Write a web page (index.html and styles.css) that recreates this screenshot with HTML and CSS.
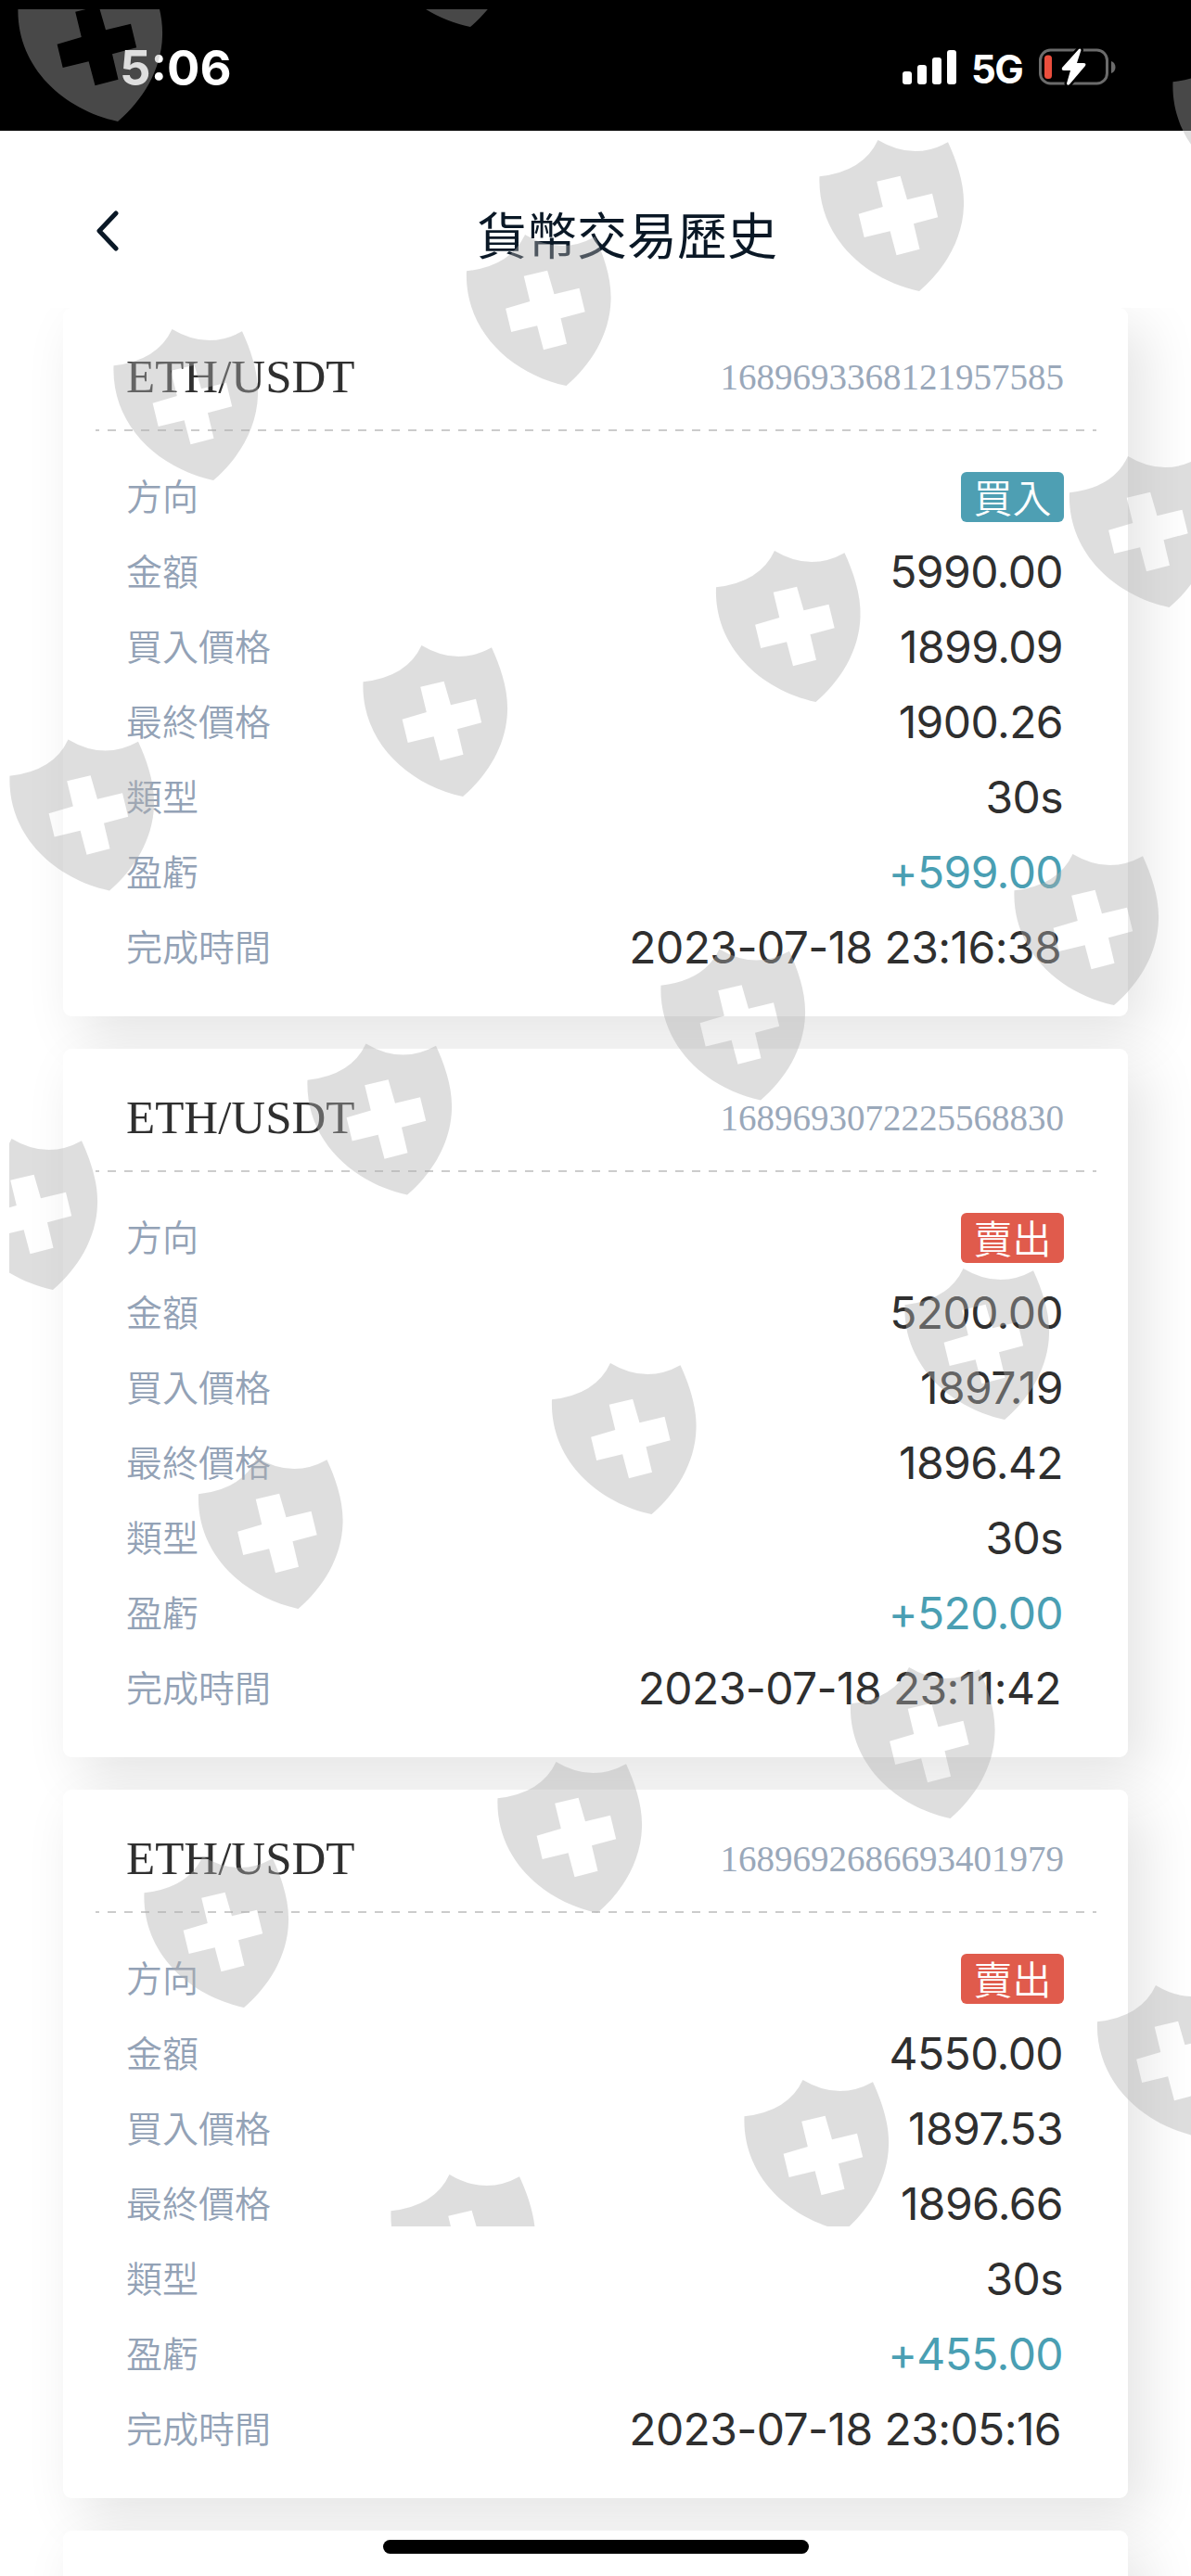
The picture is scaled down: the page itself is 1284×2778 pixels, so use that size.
FILE: index.html
```html
<!DOCTYPE html>
<html lang="zh-Hant">
  <head>
    <meta charset="UTF-8" />
    <meta name="viewport" content="width=device-width, initial-scale=1.0" />
    <title>貨幣交易歷史</title>
    <link rel="stylesheet" href="styles.css">
  </head>
  <body>
    <div class="status-bar">
      <span class="time">5:06</span>
      <div class="status-right">
        <svg class="signal" width="58" height="38" viewBox="0 0 58 38" fill="#fff">
          <rect x="0" y="23" width="10" height="14" rx="3" />
          <rect x="16" y="16" width="10" height="21" rx="3" />
          <rect x="32" y="8" width="10" height="29" rx="3" />
          <rect x="48" y="0" width="10" height="37" rx="3" />
        </svg>
        <span class="network">5G</span>
        <svg class="battery" width="84" height="44" viewBox="0 0 84 44">
          <rect x="1.5" y="4" width="72" height="36" rx="11" fill="none" stroke="#6b6b6b" stroke-width="3" />
          <path d="M78 16 C84 18 84 27 78 29 Z" fill="#6b6b6b" />
          <rect x="6" y="9.500" width="8" height="25.500" rx="3.500" fill="#eb4e3d" />
          <path d="M43 3 L25 23 Q24 26 27 26 H34 L30 40 Q30.500 43 33 41 L50 21 Q51.500 18 48 18 H41 L45.500 4 Q45 1.500 43 3 Z" fill="#fff" stroke="#000" stroke-width="5" paint-order="stroke" />
        </svg>
      </div>
    </div>

    <header class="nav">
      <svg class="back" width="26" height="46" viewBox="0 0 26 46">
        <path d="M22 4 L4 23 L22 42" fill="none" stroke="#0a1826" stroke-width="5" stroke-linecap="round" stroke-linejoin="round" />
      </svg>
      <h1>貨幣交易歷史</h1>
    </header>

    <main class="list">
      <section class="card">
        <div class="card-head">
          <span class="pair">ETH/USDT</span>
          <span class="order-no">1689693368121957585</span>
        </div>
        <ul class="card-body">
          <li><label>方向</label><span class="tag buy">買入</span></li>
          <li><label>金額</label><span class="value">5990.00</span></li>
          <li><label>買入價格</label><span class="value">1899.09</span></li>
          <li><label>最終價格</label><span class="value">1900.26</span></li>
          <li><label>類型</label><span class="value">30s</span></li>
          <li><label>盈虧</label><span class="value profit">+599.00</span></li>
          <li><label>完成時間</label><span class="value date">2023-07-18 23:16:38</span></li>
        </ul>
      </section>

      <section class="card">
        <div class="card-head">
          <span class="pair">ETH/USDT</span>
          <span class="order-no">1689693072225568830</span>
        </div>
        <ul class="card-body">
          <li><label>方向</label><span class="tag sell">賣出</span></li>
          <li><label>金額</label><span class="value">5200.00</span></li>
          <li><label>買入價格</label><span class="value">1897.19</span></li>
          <li><label>最終價格</label><span class="value">1896.42</span></li>
          <li><label>類型</label><span class="value">30s</span></li>
          <li><label>盈虧</label><span class="value profit">+520.00</span></li>
          <li><label>完成時間</label><span class="value date">2023-07-18 23:11:42</span></li>
        </ul>
      </section>

      <section class="card">
        <div class="card-head">
          <span class="pair">ETH/USDT</span>
          <span class="order-no">1689692686693401979</span>
        </div>
        <ul class="card-body">
          <li><label>方向</label><span class="tag sell">賣出</span></li>
          <li><label>金額</label><span class="value">4550.00</span></li>
          <li><label>買入價格</label><span class="value">1897.53</span></li>
          <li><label>最終價格</label><span class="value">1896.66</span></li>
          <li><label>類型</label><span class="value">30s</span></li>
          <li><label>盈虧</label><span class="value profit">+455.00</span></li>
          <li><label>完成時間</label><span class="value date">2023-07-18 23:05:16</span></li>
        </ul>
      </section>

      <section class="card"></section>
    </main>

    <div class="home-indicator"></div>

    <!-- 盾牌水印 -->
    <svg class="watermark" width="1274" height="2391" viewBox="10 10 1274 2391">
      <defs>
        <path id="shield" fill-rule="evenodd" d="M.5 39.300 Q48 34 63.500 0 Q102 23 139 2.300 C148 22 157 47 156 71 C155 108 134 141 108 163 C48 150 -2 103 .5 39.300 Z
          M62.200 44.700 L87.600 38.700 L95 64.300 L122 57.700 L128.200 83.300 L102 90.300 L108.500 117.700 L83.500 124.300 L76.600 98.300 L48.700 105 L42.600 79.700 L68.800 72 Z" />
      </defs>
      <use href="#shield" x="19" y="-32" />
      <use href="#shield" x="399" y="-134" />
      <use href="#shield" x="1264" y="49" />
      <use href="#shield" x="883" y="151" />
      <use href="#shield" x="502.500" y="253" />
      <use href="#shield" x="122" y="355" />
      <use href="#shield" x="1152.500" y="492" />
      <use href="#shield" x="771.500" y="594" />
      <use href="#shield" x="391" y="696" />
      <use href="#shield" x="10" y="797.500" />
      <use href="#shield" x="1093" y="921" />
      <use href="#shield" x="712" y="1023.500" />
      <use href="#shield" x="331" y="1125.500" />
      <use href="#shield" x="-51" y="1228" />
      <use href="#shield" x="975" y="1368" />
      <use href="#shield" x="594.500" y="1470" />
      <use href="#shield" x="213.500" y="1572" />
      <use href="#shield" x="916.500" y="1798" />
      <use href="#shield" x="536" y="1900" />
      <use href="#shield" x="155" y="2002" />
      <use href="#shield" x="1182.500" y="2141" />
      <use href="#shield" x="802" y="2243" />
      <use href="#shield" x="421" y="2345" />
    </svg>
  </body>
</html>
```
FILE: styles.css
```css
* {
  box-sizing: border-box;
}

body {
  position: relative;
  margin: 0;
  width: 1284px;
  height: 2778px;
  overflow: hidden;
  display: flex;
  flex-direction: column;
  background-color: #fff;
  font-family: Inter, 'Noto Sans CJK TC', sans-serif;
  color: #2f2f2f;
}

.status-bar {
  flex: none;
  height: 141px;
  padding: 0 80px 0 129px;
  display: flex;
  justify-content: space-between;
  background-color: #000;
  color: #fff;
}

.time {
  margin-top: 42px;
  font-size: 52.5px;
  line-height: 62px;
  font-weight: 700;
}

.status-right {
  display: flex;
  align-items: flex-start;
}

.signal {
  margin-top: 54px;
}

.network {
  width: 89px;
  padding-left: 16px;
  margin-top: 50px;
  font-size: 42px;
  line-height: 50px;
  font-weight: 700;
  letter-spacing: -1.5px;
}

.battery {
  margin-top: 50px;
}

.nav {
  flex: none;
  height: 191px;
  display: flex;
  align-items: flex-start;
}

.back {
  margin: 85px 0 0 103px;
}

h1 {
  margin: 75px 0 0 385px;
  font-size: 54px;
  line-height: 80px;
  font-weight: 400;
  color: #0a1826;
}

.list {
  flex: 1;
  min-height: 0;
  overflow: hidden;
  padding: 0 68px;
}

.card {
  height: 764px;
  margin-bottom: 35px;
  padding: 0 34px 0 35px;
  background-color: #fff;
  border-radius: 9px;
  box-shadow: 18px 20px 60px rgba(0, 0, 0, 0.11);
}

.card-head {
  height: 133px;
  padding: 15px 35px 0 33px;
  display: flex;
  align-items: center;
  justify-content: space-between;
  font-family: 'Liberation Serif', serif;
  background: repeating-linear-gradient(90deg, #ccc 0 9px, transparent 9px 18px) -5px 100% / 1134px 2px no-repeat;
}

.pair {
  font-size: 51px;
}

.order-no {
  font-size: 39px;
  color: #9aa8ba;
}

.card-body {
  list-style: none;
  margin: 0;
  padding: 30px 35px 0 33px;
}

li {
  height: 81px;
  display: flex;
  align-items: center;
  justify-content: space-between;
}

label {
  padding-bottom: 6px;
  font-size: 39px;
  font-weight: 350;
  color: #93a2b6;
}

.value {
  margin-right: 1px;
  font-size: 48px;
  letter-spacing: -0.6px;
}

.date {
  margin-right: 3px;
}

.profit {
  color: #4a9fb3;
}

.tag {
  width: 111px;
  height: 54px;
  padding-top: 1px;
  border-radius: 6px;
  font-size: 42px;
  line-height: 56px;
  text-align: center;
  font-weight: 350;
  color: #fff;
}

.buy {
  background-color: #4e9fb3;
}

.sell {
  background-color: #e05b4c;
}

.home-indicator {
  position: absolute;
  left: 413px;
  bottom: 24px;
  width: 459px;
  height: 15px;
  border-radius: 8px;
  background-color: #000;
}

.watermark {
  position: absolute;
  left: 10px;
  top: 10px;
  fill: #b0b0b0;
  opacity: 0.41;
  pointer-events: none;
}
```
